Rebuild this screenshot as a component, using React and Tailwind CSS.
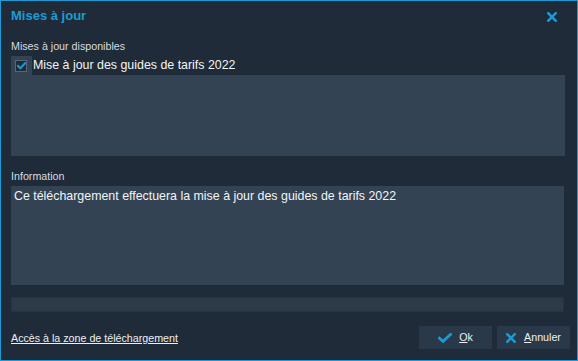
import React from "react";

const font = { fontFamily: '"Liberation Sans", Arial, sans-serif' };

function CheckIcon({ className }) {
  return (
    <svg className={className} width="14" height="10" viewBox="0 0 14 10" fill="none">
      <path d="M1.5 5.2 L5 8.4 L12.6 1.4" stroke="#1b9bd6" strokeWidth="2.8" strokeLinecap="square" strokeLinejoin="miter" />
    </svg>
  );
}

function XIcon({ size = 10 }) {
  return (
    <svg width={size} height={size} viewBox="0 0 10 10" fill="none">
      <path d="M1.2 1.2 L8.8 8.8 M8.8 1.2 L1.2 8.8" stroke="#1b9bd6" strokeWidth="2.5" strokeLinecap="square" />
    </svg>
  );
}

export default function App() {
  return (
    <div
      className="w-[578px] h-[361px] border border-[#1b9bd6] bg-[#1f2b38] flex flex-col overflow-hidden"
      style={font}
    >
      <div className="flex justify-between pl-[10px] pr-[20px] pt-[7px]">
        <div className="text-[13px] leading-[15px] font-bold text-[#1b9bd6]">Mises à jour</div>
        <div className="pt-[4px]">
          <XIcon size={10} />
        </div>
      </div>

      <div className="pl-[10px] mt-[17px] text-[10.7px] leading-[12px] text-[#d6dbe0]">
        Mises à jour disponibles
      </div>
      <div className="ml-[10px] mt-[4px] w-[554px] h-[100px] bg-[#344354]">
        <div className="flex h-[19px] items-center">
          <div className="w-[21px] h-[19px] flex items-center pl-[4px]">
            <div className="w-[12px] h-[12px] border border-[#56677a] bg-[#1f2b38] flex items-center justify-center">
              <svg width="9" height="8" viewBox="0 0 9 8" fill="none">
                <path d="M1 4 L3.4 6.3 L8 1.3" stroke="#1b9bd6" strokeWidth="2" strokeLinecap="square" />
              </svg>
            </div>
          </div>
          <div className="flex-1 h-[19px] bg-[#1f2b38] pl-[1px] text-[12.4px] leading-[19px] text-[#f2f4f6]">
            Mise à jour des guides de tarifs 2022
          </div>
        </div>
      </div>

      <div className="pl-[10px] mt-[14px] text-[10.7px] leading-[12px] text-[#d6dbe0]">Information</div>
      <div className="ml-[10px] mt-[4px] w-[553px] h-[99px] bg-[#344354] px-[3px] pt-[2.5px] text-[12.4px] leading-[15px] text-[#f2f4f6]">
        Ce téléchargement effectuera la mise à jour des guides de tarifs 2022
      </div>

      <div className="ml-[10px] mt-[12px] w-[553px] h-[15px] bg-[#2c3a4a] border border-[#28333f]"></div>

      <div className="mt-[14px] pl-[10px] pr-[7px] flex items-center justify-between">
        <a className="text-[10.7px] leading-[12px] text-[#eceff2] underline underline-offset-[1px] cursor-pointer">
          Accès à la zone de téléchargement
        </a>
        <div className="flex gap-[5px]">
          <button className="w-[73px] h-[23px] bg-[#29394a] flex items-center justify-center gap-[7px] text-[10.7px] text-[#eceff2]" style={font}>
            <CheckIcon />
            <span>
              <span className="underline underline-offset-[1px]">O</span>k
            </span>
          </button>
          <button className="w-[73px] h-[23px] bg-[#29394a] flex items-center justify-center gap-[8px] text-[10.7px] text-[#eceff2]" style={font}>
            <XIcon size={10} />
            <span>
              <span className="underline underline-offset-[1px]">A</span>nnuler
            </span>
          </button>
        </div>
      </div>
    </div>
  );
}
